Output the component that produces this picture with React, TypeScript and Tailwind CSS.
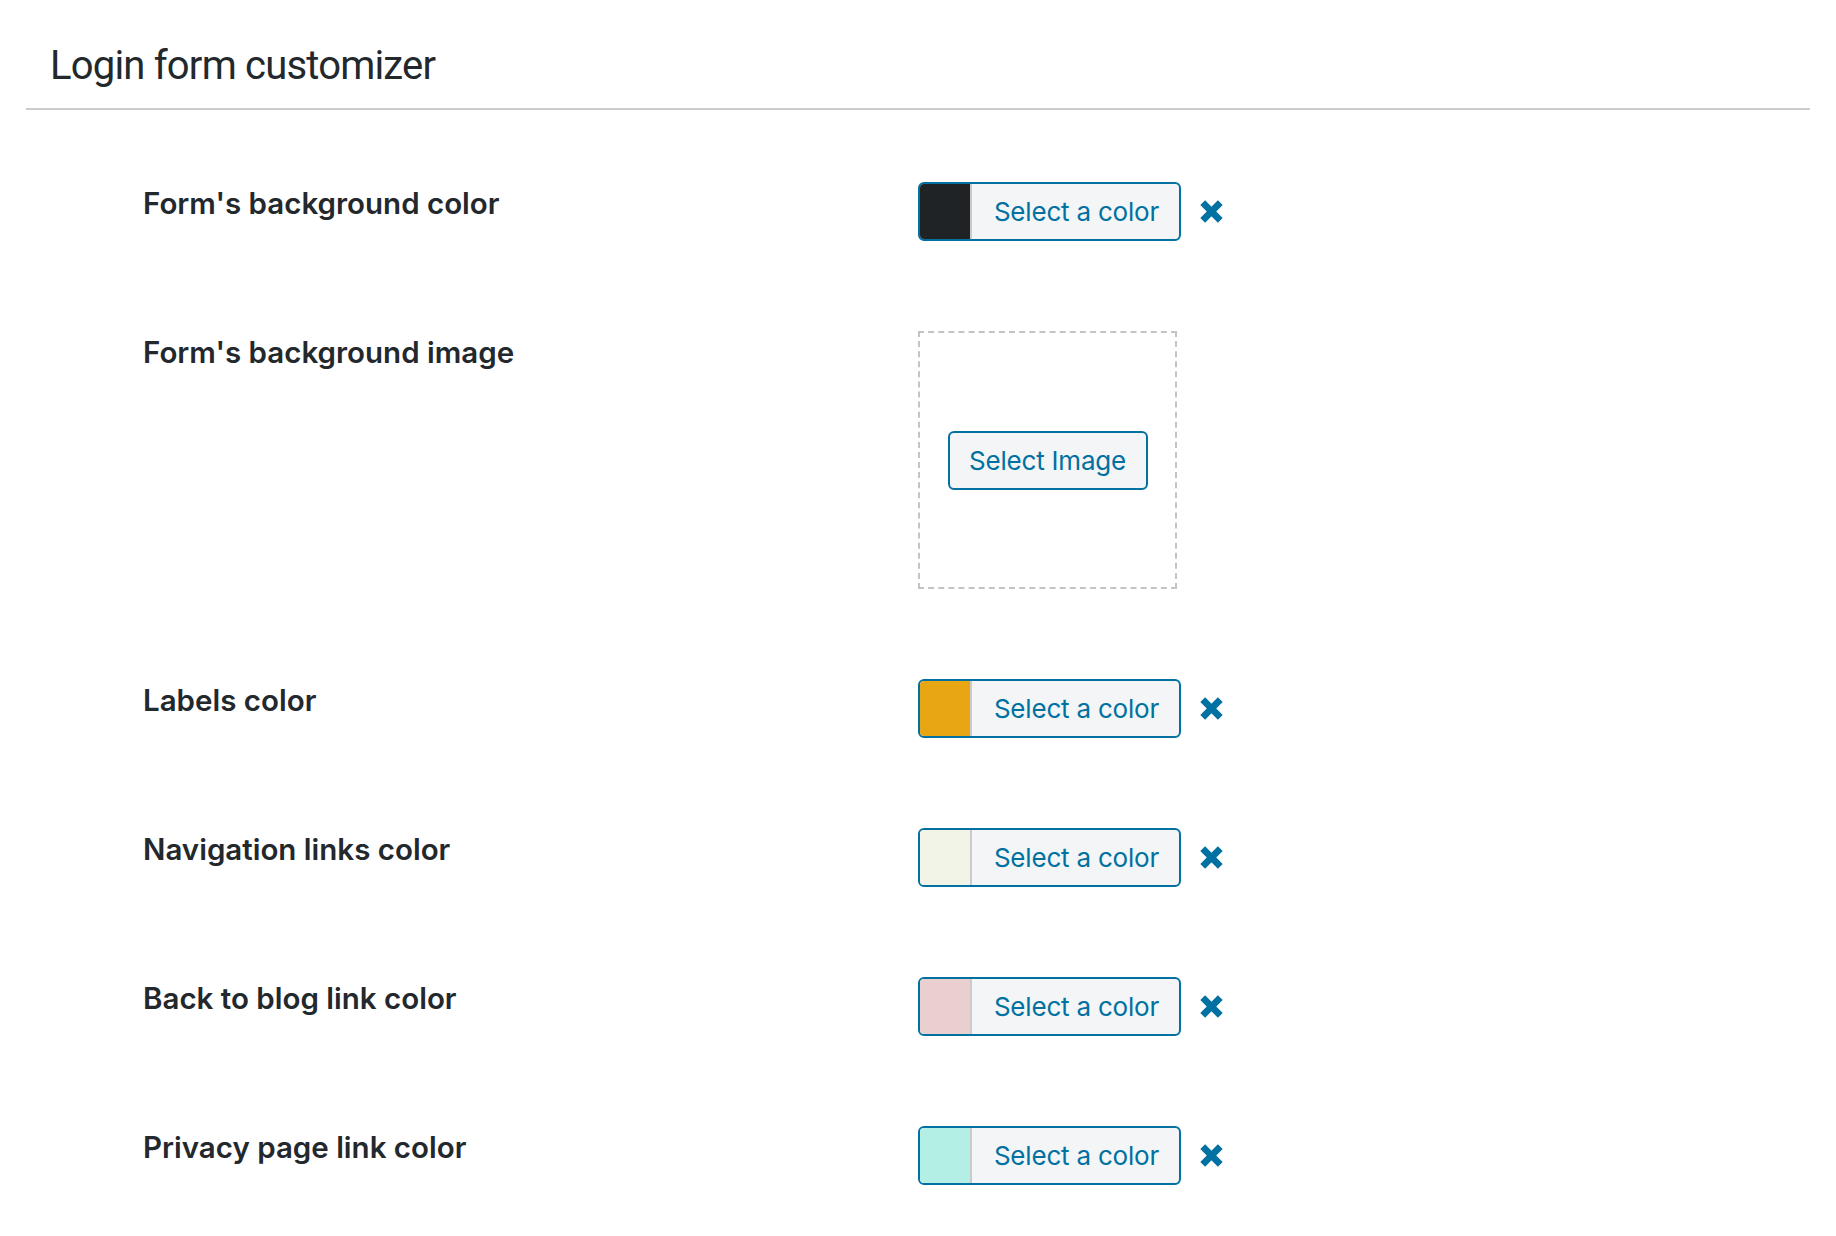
import React from 'react';

type ColorRow = { label: string; color: string };

const colorRows: ColorRow[] = [
  { label: 'Labels color', color: '#e9a614' },
  { label: 'Navigation links color', color: '#f2f4e8' },
  { label: 'Back to blog link color', color: '#eacfcf' },
  { label: 'Privacy page link color', color: '#b3efe5' },
];

const ClearIcon = () => (
  <svg width="23" height="23" viewBox="0 0 22 22" className="shrink-0">
    <path d="M2.6 2.6 L19.4 19.4 M19.4 2.6 L2.6 19.4" stroke="#0071a1" strokeWidth="6.5" strokeLinecap="butt" />
  </svg>
);

const ColorPicker: React.FC<{ color: string }> = ({ color }) => (
  <div className="flex items-center gap-[19px]">
    <button className="flex h-[59px] w-[263px] overflow-hidden rounded-[6px] border-2 border-[#0071a1] bg-[#f3f5f6]">
      <span className="h-full w-[52px] border-r-2 border-[#c9cbcd]" style={{ backgroundColor: color }} />
      <span className="flex flex-1 items-center justify-center pl-[2px] text-[26px] tracking-[-0.2px] text-[#0071a1]">
        Select a color
      </span>
    </button>
    <ClearIcon />
  </div>
);

const Row: React.FC<{ label: string; children: React.ReactNode }> = ({ label, children }) => (
  <div className="flex items-start">
    <div className="w-[775px] shrink-0 pt-[1px] text-[29.5px] font-semibold leading-[40px] text-[#23282d]">{label}</div>
    <div>{children}</div>
  </div>
);

export default function App() {
  return (
    <div className="min-h-screen bg-white font-['Inter',sans-serif]">
      <h1 className="px-[50px] pt-[42px] font-['Roboto',sans-serif] text-[40px] font-normal leading-[48px] tracking-[-0.8px] text-[#23282d]">
        Login form customizer
      </h1>
      <div className="ml-[26px] mr-[26px] mt-[18px] h-[2px] bg-[#cccccc]" />

      <div className="mt-[72px] flex flex-col gap-[90px] pl-[143px]">
        <Row label="Form's background color">
          <ColorPicker color="#1f2326" />
        </Row>
        <Row label="Form's background image">
          <div className="flex h-[258px] w-[259px] items-center justify-center border-2 border-dashed border-[#c3c4c7]">
            <button className="h-[59px] w-[200px] rounded-[6px] border-2 border-[#0071a1] bg-[#f3f5f6] text-[26px] tracking-[-0.2px] text-[#0071a1]">
              Select Image
            </button>
          </div>
        </Row>
        {colorRows.map((r) => (
          <Row key={r.label} label={r.label}>
            <ColorPicker color={r.color} />
          </Row>
        ))}
      </div>
    </div>
  );
}
